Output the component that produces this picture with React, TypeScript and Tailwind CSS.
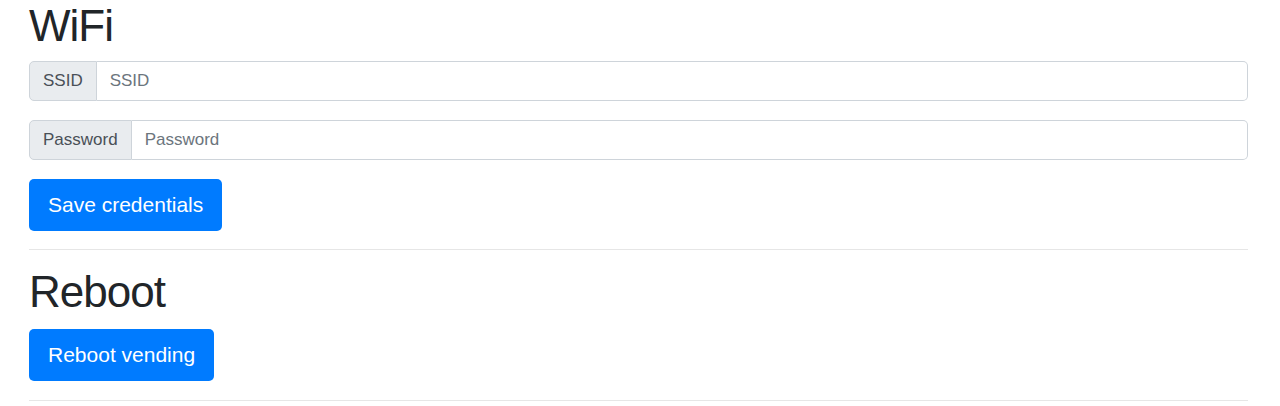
const font = { fontFamily: '"Liberation Sans", Arial, sans-serif' };

function InputGroup({ label, placeholder }: { label: string; placeholder: string }) {
  return (
    <div className="flex h-[40px] w-full text-[17px]">
      <span className="flex items-center px-[13px] bg-[#e9ecef] text-[#495057] border border-[#ced4da] rounded-l-[5px]">
        {label}
      </span>
      <input
        type="text"
        placeholder={placeholder}
        className="flex-1 min-w-0 px-[13px] border border-l-0 border-[#ced4da] rounded-r-[5px] text-[#495057] placeholder:text-[#6c757d] outline-none"
      />
    </div>
  );
}

export default function App() {
  return (
    <div className="bg-white min-h-[406px] pl-[29px] pr-[32px] text-[#212529]" style={font}>
      {/* WiFi */}
      <h1 className="text-[44px] leading-[1.2] tracking-[-1px] mb-[8px]">WiFi</h1>
      <div className="flex flex-col gap-[19px]">
        <InputGroup label="SSID" placeholder="SSID" />
        <InputGroup label="Password" placeholder="Password" />
      </div>
      <button
        type="button"
        className="mt-[19px] h-[52px] px-[19px] rounded-[5px] bg-[#007bff] text-white text-[21px]"
      >
        Save credentials
      </button>
      <hr className="mt-[18px] border-t border-[#e6e6e6]" />

      {/* Reboot */}
      <h1 className="mt-[16px] text-[44px] leading-[1.2] tracking-[-1px] mb-[10px]">Reboot</h1>
      <button
        type="button"
        className="h-[52px] px-[19px] rounded-[5px] bg-[#007bff] text-white text-[21px]"
      >
        Reboot vending
      </button>
      <hr className="mt-[19px] border-t border-[#e6e6e6]" />
    </div>
  );
}
